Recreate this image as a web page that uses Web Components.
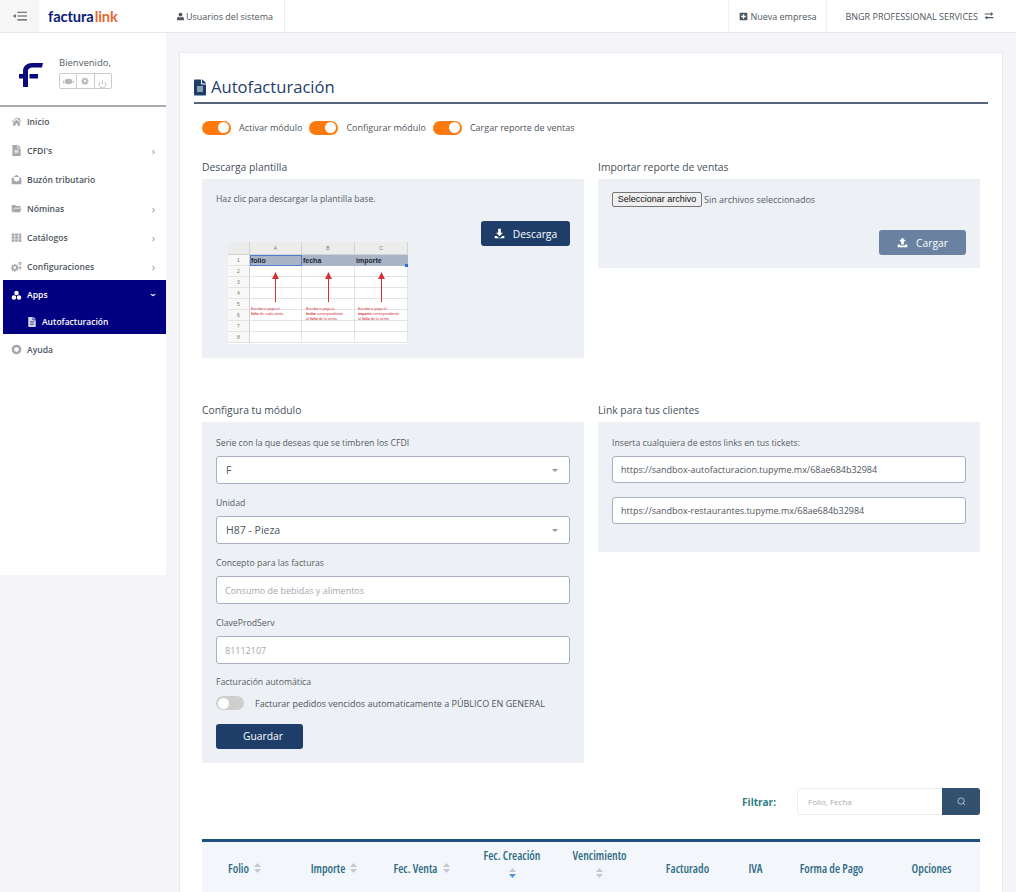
<!DOCTYPE html>
<html lang="es">
<head>
<meta charset="utf-8">
<title>Autofacturación</title>
<style>
  html, body { margin: 0; height: 892px; overflow: hidden; background: #f4f4f9; }
  body { font-family: "Open Sans", "Liberation Sans", sans-serif; color: #5c6873; }
</style>
</head>
<body>
<app-shell>
  <top-bar slot="top"></top-bar>
  <side-bar slot="side"></side-bar>
  <module-card slot="main"></module-card>
</app-shell>

<script>
const ICONS = {
  doc: ['0 0 384 512', 'M224 136V0H24C10.7 0 0 10.7 0 24v464c0 13.3 10.7 24 24 24h336c13.3 0 24-10.7 24-24V160H248c-13.2 0-24-10.8-24-24zm64 236c0 6.6-5.4 12-12 12H108c-6.6 0-12-5.4-12-12v-8c0-6.6 5.4-12 12-12h168c6.6 0 12 5.4 12 12v8zm0-64c0 6.6-5.4 12-12 12H108c-6.6 0-12-5.4-12-12v-8c0-6.6 5.4-12 12-12h168c6.6 0 12 5.4 12 12v8zm0-72v8c0 6.6-5.4 12-12 12H108c-6.6 0-12-5.4-12-12v-8c0-6.6 5.4-12 12-12h168c6.6 0 12 5.4 12 12zm96-114.1v6.1H256V0h6.1c6.4 0 12.5 2.5 17 7l97.9 98c4.500 4.500 7 10.6 7 16.9z'],
  home: ['0 0 16 16', 'M8 2 .5 8.2l.8 1L8 3.7l6.7 5.5.8-1L13 6.1V3h-2v1.5zM3 9.6V14h3.6v-3h2.8v3H13V9.6L8 5.5z'],
  inbox: ['0 0 16 16', 'M8 1 1 6v8a1 1 0 0 0 1 1h12a1 1 0 0 0 1-1V6zM4 4.5h8V9l-4 2.4L4 9z'],
  folder: ['0 0 16 16', 'M1 13V4a1 1 0 0 1 1-1h4l1.500 1.500H13a1 1 0 0 1 1 1V7H4.500L2 13zM5 8h10.500L13 13.500H2z'],
  grid: ['0 0 16 16', 'M1 2h4v3.400H1zm5 0h4v3.400H6zm5 0h4v3.400h-4zM1 6.300h4v3.400H1zm5 0h4v3.400H6zm5 0h4v3.400h-4zM1 10.600h4V14H1zm5 0h4V14H6zm5 0h4V14h-4z'],
  cogs: ['0 0 16 16', 'M4.600 4h1.600l.3 1.500 1.100.5L9 5.200l1.100 1.100-.8 1.300.5 1.100 1.400.3v1.600l-1.400.3-.5 1.100.8 1.300L9 14.400l-1.300-.8-1.200.5-.3 1.400H4.600l-.3-1.400-1.200-.5-1.300.8L.7 13.300l.8-1.300-.5-1.100-1-.3V9l1-.3.5-1.100-.8-1.300 1.100-1.100 1.300.8 1.200-.5zm.8 3.800a2 2 0 1 0 0 4 2 2 0 0 0 0-4zM13 1a2.400 2.400 0 1 0 0 4.800A2.400 2.400 0 0 0 13 1zm0 1.500a.9.9 0 1 1 0 1.800.9.9 0 0 1 0-1.800zm0 5a2.400 2.400 0 1 0 0 4.800 2.400 2.400 0 0 0 0-4.800zm0 1.500a.9.9 0 1 1 0 1.800.9.9 0 0 1 0-1.800z'],
  apps: ['0 0 16 16', 'M8 1a3.300 3.300 0 1 0 0 6.600A3.300 3.300 0 0 0 8 1zM4.300 7.600a3.300 3.300 0 1 0 0 6.600 3.300 3.300 0 0 0 0-6.600zm7.400 0a3.300 3.300 0 1 0 0 6.600 3.300 3.300 0 0 0 0-6.600z'],
  ring: ['0 0 16 16', 'M8 1a7 7 0 1 0 0 14A7 7 0 0 0 8 1zm0 3.600a3.400 3.400 0 1 1 0 6.800 3.400 3.400 0 0 1 0-6.800z'],
  user: ['0 0 14 14', 'M7 1a3 3 0 1 0 0 6 3 3 0 0 0 0-6zM4 7.500C2.300 8 1.500 9.500 1.500 11.500c0 .9.600 1.500 1.500 1.500h8c.9 0 1.500-.6 1.500-1.500 0-2-.8-3.500-2.500-4-.8.600-1.800 1-3 1s-2.200-.4-3-1z'],
  plus: ['0 0 14 14', 'M2 1h10a1 1 0 0 1 1 1v10a1 1 0 0 1-1 1H2a1 1 0 0 1-1-1V2a1 1 0 0 1 1-1zm4 2.500V6H3.500v2H6v2.500h2V8h2.500V6H8V3.500z'],
  swap: ['0 0 14 14', 'M1 3.500h8.500V1.500L13 4.300 9.500 7V5H1zM13 8.500H4.500v-2L1 9.300 4.500 12v-2H13z'],
  menu: ['0 0 16 12', 'M5 1h11v1.400H5zM5 5.300h11v1.400H5zM5 9.600h11V11H5zM3 3.700v4.600L0 6z'],
  download: ['0 0 16 16', 'M6 1h4v6h3L8 12 3 7h3zM1 11.500h3L6.500 14h3l2.500-2.500h3V15H1z'],
  upload: ['0 0 16 16', 'M8 1l5 5h-3v5H6V6H3zM1 11h3.500v1.500h7V11H15v4H1z'],
  eye: ['0 0 16 10', 'M0 4h2v3H0zm14 0h2v3h-2zM3 2.500c1.500-1.500 3.500-2 5-1 1.500-1 3.500-.5 5 1v5c-1.500 1-3 1.500-5 1.500s-3.500-.5-5-1.500z'],
  gear: ['0 0 16 16', 'M7 1h2l.4 2 1.500.6 1.700-1.100 1.400 1.400-1.100 1.700.6 1.500 2 .4v2l-2 .4-.6 1.500 1.100 1.700-1.400 1.400-1.700-1.100-1.500.6-.4 2H7l-.4-2-1.500-.6-1.700 1.100-1.400-1.400 1.100-1.700-.6-1.500-2-.4V7l2-.4.6-1.500-1.100-1.700 1.400-1.400 1.700 1.100 1.500-.6zm1 4.500a2.500 2.500 0 1 0 0 5 2.500 2.500 0 0 0 0-5z'],
};

class AppIcon extends HTMLElement {
  connectedCallback() {
    const [box, d] = ICONS[this.getAttribute('name')];
    const size = this.getAttribute('size') || 12;
    const w = this.getAttribute('w') || size;
    this.attachShadow({ mode: 'open' }).innerHTML = `
      <style>
        :host { display: inline-flex; flex: none; }
        svg { display: block; fill: currentColor; }
      </style>
      <svg width="${w}" height="${size}" viewBox="${box}"><path d="${d}"/></svg>`;
  }
}
customElements.define('app-icon', AppIcon);

class AppShell extends HTMLElement {
  constructor() {
    super();
    this.attachShadow({ mode: 'open' }).innerHTML = `
      <style>
        :host { display: grid; grid-template-columns: 166px 1fr; grid-template-rows: 33px 1fr; height: 892px; overflow: hidden; }
        .top { grid-column: 1 / 3; }
        .main { padding: 19px 13px 0; min-width: 0; }
        .side { height: 542px; }
      </style>
      <div class="top"><slot name="top"></slot></div>
      <div class="side"><slot name="side"></slot></div>
      <div class="main"><slot name="main"></slot></div>`;
  }
}
customElements.define('app-shell', AppShell);

class TopBar extends HTMLElement {
  constructor() {
    super();
    this.attachShadow({ mode: 'open' }).innerHTML = `
      <style>
        :host { display: flex; height: 32px; background: #fff; border-bottom: 1px solid #e4e6eb; font-size: 9px; color: #4e5660; align-items: stretch; }
        .burger { width: 39px; background: #f6f6f6; display: flex; align-items: center; justify-content: center; color: #555; }
        .logo { width: 127px; padding-left: 9px; box-sizing: border-box; display: flex; align-items: center; font: 700 14.700px/1 Lato, "Open Sans", sans-serif; letter-spacing: -.1px; color: #0a1a78; }
        .logo span { color: #e8672e; font-weight: 700; margin-left: 1px; }
        .item { display: flex; align-items: center; gap: 1px; padding: 0 11px 0 10px; border-right: 1px solid #eeeff2; }
        .grow { flex: 1; border-right: 1px solid #eeeff2; }
        .nueva { padding: 0 10px; gap: 2px; }
        .company { border: 0; gap: 6px; padding: 0 22px 0 18px; }
      </style>
      <div class="burger"><app-icon name="menu" size="14"></app-icon></div>
      <div class="logo">factura<span>link</span></div>
      <div class="item"><app-icon name="user" size="9"></app-icon>Usuarios del sistema</div>
      <div class="grow"></div>
      <div class="item nueva"><app-icon name="plus" size="9"></app-icon>Nueva empresa</div>
      <div class="item company">BNGR PROFESSIONAL SERVICES<app-icon name="swap" size="10"></app-icon></div>`;
  }
}
customElements.define('top-bar', TopBar);

class SideItem extends HTMLElement {
  constructor() {
    super();
    const arrow = this.hasAttribute('arrow') ? '<span class="arrow">›</span>' : '';
    this.attachShadow({ mode: 'open' }).innerHTML = `
      <style>
        :host { display: flex; height: 29px; align-items: center; padding: 0 11px; gap: 5px; font-size: 8.600px; font-weight: 600; color: #4e5660; }
        app-icon { color: #a3a8ae; width: 11px; }
        :host([active]) { color: #fff; }
        :host([active]) app-icon { color: #fff; }
        .label { flex: 1; }
        .arrow { color: #a6abb1; font-size: 10px; }
        :host([active]) .arrow { color: #fff; transform: rotate(90deg); }
      </style>
      <app-icon name="${this.getAttribute('icon')}" size="11"></app-icon>
      <span class="label"><slot></slot></span>${arrow}`;
  }
}
customElements.define('side-item', SideItem);

class SideBar extends HTMLElement {
  constructor() {
    super();
    this.attachShadow({ mode: 'open' }).innerHTML = `
      <style>
        :host { display: block; height: 100%; background: #fff; }
        .welcome { height: 74px; box-sizing: border-box; border-bottom: 2px solid #a9abae; display: flex; padding: 23px 0 0 19px; gap: 16px; }
        .welcome svg { margin-top: 6px; }
        .hello { font-size: 9.500px; color: #555d66; line-height: 13px; }
        .tools { display: flex; width: 53px; height: 16px; margin-top: 4px; border: 1px solid #c8ccd1; border-radius: 2px; box-sizing: border-box; }
        .tools i { flex: 1; display: flex; align-items: center; justify-content: center; color: #b5b9be; border-left: 1px solid #c8ccd1; font-style: normal; }
        .tools i:first-child { border-left: 0; }
        .group { background: #000080; margin-left: 3px; height: 54px; margin-top: -1px; margin-bottom: 1px; padding-top: 1px; box-sizing: border-box; }
        .group side-item { padding-left: 8px; height: 28px; }
        .sub { display: flex; height: 25px; align-items: center; gap: 5px; padding-left: 24px; font-size: 8.500px; font-weight: 600; color: #fff; }
        .sub app-icon { color: #d5d5e8; }
      </style>
      <div class="welcome">
        <svg width="24" height="25" viewBox="0 0 24 25"><path fill="#0b0b7c" d="M4 25V9C4 4 8 1 13 1h11l-1 4.500H14c-3 0-5 1-5 4V25zM0 12h4v4.500H0zM10.500 12H19v4.500h-8.500z"/></svg>
        <div>
          <div class="hello">Bienvenido,</div>
          <div class="tools">
            <i><app-icon name="eye" size="11"></app-icon></i>
            <i><app-icon name="gear" size="8"></app-icon></i>
            <i><svg width="9" height="9" viewBox="0 0 10 10"><path fill="none" stroke="currentColor" d="M5 .5v4M2.800 2A3.700 3.700 0 1 0 7.200 2"/></svg></i>
          </div>
        </div>
      </div>
      <side-item icon="home">Inicio</side-item>
      <side-item icon="doc" arrow>CFDI's</side-item>
      <side-item icon="inbox">Buzón tributario</side-item>
      <side-item icon="folder" arrow>Nóminas</side-item>
      <side-item icon="grid" arrow>Catálogos</side-item>
      <side-item icon="cogs" arrow>Configuraciones</side-item>
      <div class="group">
        <side-item icon="apps" arrow active>Apps</side-item>
        <div class="sub"><app-icon name="doc" size="10"></app-icon>Autofacturación</div>
      </div>
      <side-item icon="ring">Ayuda</side-item>`;
  }
}
customElements.define('side-bar', SideBar);

class ToggleSwitch extends HTMLElement {
  constructor() {
    super();
    this.attachShadow({ mode: 'open' }).innerHTML = `
      <style>
        :host { display: inline-flex; align-items: center; gap: 8px; font-size: 9px; color: #4e5660; }
        .track { width: 29px; height: 14px; border-radius: 7px; background: #ff7a0d; display: flex; justify-content: flex-end; align-items: center; padding: 0 2px; box-sizing: border-box; }
        .knob { width: 11px; height: 11px; background: #fff; border-radius: 50%; }
        :host([off]) .track { background: #cfcfcf; justify-content: flex-start; width: 28px; }
      </style>
      <span class="track"><span class="knob"></span></span>
      <span><slot></slot></span>`;
  }
}
customElements.define('toggle-switch', ToggleSwitch);

class PanelBox extends HTMLElement {
  constructor() {
    super();
    this.attachShadow({ mode: 'open' }).innerHTML = `
      <style>
        :host { display: block; }
        h3 { margin: 0; font-size: 10.300px; line-height: 14px; font-weight: 400; color: #46505a; padding-bottom: 5px; }
        .box { background: #edf0f4; padding: 14px; box-sizing: border-box; height: var(--h); }
      </style>
      <h3>${this.getAttribute('heading')}</h3>
      <div class="box" style="--h:${this.getAttribute('h')}px"><slot></slot></div>`;
  }
}
customElements.define('panel-box', PanelBox);

class ActionButton extends HTMLElement {
  constructor() {
    super();
    const icon = this.getAttribute('icon');
    this.attachShadow({ mode: 'open' }).innerHTML = `
      <style>
        :host { display: inline-flex; align-items: center; justify-content: center; gap: 8px; width: 89px; height: 25px; background: #1e3e69; color: #fff; border-radius: 3px; font-size: 10.300px; box-sizing: border-box; }
        :host([muted]) { background: #6a81a1; width: 87px; }
      </style>
      ${icon ? `<app-icon name="${icon}" size="11"></app-icon>` : ''}<slot></slot>`;
  }
}
customElements.define('action-button', ActionButton);

class FormField extends HTMLElement {
  constructor() {
    super();
    const label = this.getAttribute('label');
    const select = this.hasAttribute('select');
    this.attachShadow({ mode: 'open' }).innerHTML = `
      <style>
        :host { display: block; font-size: 8.700px; color: #555d66; }
        label { display: block; line-height: 12px; margin-bottom: 7px; }
        .ctl { height: var(--ctl-h, 28px); background: #fff; border: 1px solid #a9b0bd; border-radius: 3px; box-sizing: border-box; display: flex; align-items: center; padding: 0 11px 0 8px; justify-content: space-between; color: #4e5660; font-size: 9px; }
        :host([select]) .ctl { font-size: 10.500px; padding-left: 9px; }
        :host([empty]) .ctl { color: #a5a9af; }
        .caret { width: 0; height: 0; border: 3.500px solid transparent; border-top: 3.500px solid #94989e; border-bottom: 0; }
      </style>
      ${label ? `<label>${label}</label>` : ''}
      <div class="ctl"><span><slot></slot></span>${select ? '<span class="caret"></span>' : ''}</div>`;
  }
}
customElements.define('form-field', FormField);

class SheetPreview extends HTMLElement {
  constructor() {
    super();
    const arrow = `<svg width="7" height="30" viewBox="0 0 7 30"><path fill="#d6303a" d="M3.500 0 7 7H4v23H3V7H0z"/></svg>`;
    const cols = [
      ['folio', 'Escribe o pega el', '<b>folio</b> de cada venta', 1],
      ['fecha', 'Escribe o pega la', '<b>fecha</b> correspondiente<br>al <b>folio</b> de la venta', 4],
      ['importe', 'Escribe o pega el', '<b>importe</b> correspondiente<br>al <b>folio</b> de la venta', 3],
    ];
    this.attachShadow({ mode: 'open' }).innerHTML = `
      <style>
        :host { display: grid; grid-template-columns: 22px 52px 53px 53px; grid-template-rows: 13px repeat(8, 11px); width: 180px; height: 102px; overflow: hidden; background: #fff; font: 5px/1 "Liberation Sans", sans-serif; color: #777; }
        .h { background: #ececec; display: flex; align-items: center; justify-content: center; border-right: 1px solid #d2d2d2; border-bottom: 1px solid #d2d2d2; box-sizing: border-box; }
        .n { grid-column: 1; background: #f8f8f8; border-bottom-color: #e4e4e4; }
        .t { background: #a9b5c6; color: #1c2530; font-weight: 700; font-size: 7px; display: flex; align-items: center; padding-left: 1px; position: relative; }
        .t.first { outline: 1px solid #4a80d0; outline-offset: -1px; }
        .t i { position: absolute; right: 0; bottom: -1px; width: 3px; height: 3px; background: #2f6fd0; }
        .note { display: flex; flex-direction: column; align-items: center; padding-top: 6px; box-sizing: border-box; border-right: 1px solid #e4e4e4; background: repeating-linear-gradient(#fff 0 10px, #e4e4e4 10px 11px); }
        .note div { width: 100%; box-sizing: border-box; padding: 5px 0 0 var(--x); color: #d6303a; font-size: 3.700px; line-height: 5.200px; white-space: nowrap; }
      </style>
      <div class="h"></div><div class="h">A</div><div class="h">B</div><div class="h">C</div>
      <div class="h n">1</div>
      ${cols.map((c, i) => `<div class="t ${i ? '' : 'first'}">${c[0]}${i === 2 ? '<i></i>' : ''}</div>`).join('')}
      ${[2,3,4,5,6,7,8].map((n, i) => `<div class="h n" style="grid-row:${i + 3}">${n}</div>`).join('')}
      ${cols.map((c, i) => `<div class="note" style="grid-column:${i + 2};grid-row:3/10;--x:${c[3]}px">${arrow}<div>${c[1]}<br>${c[2]}</div></div>`).join('')}`;
  }
}
customElements.define('sheet-preview', SheetPreview);

class TableHead extends HTMLElement {
  constructor() {
    super();
    const sort = (on) => `<svg width="7" height="10" viewBox="0 0 7 10"><path fill="#c4c8cd" d="M3.500 0 7 4H0z"/><path fill="${on ? '#4d94e0' : '#c4c8cd'}" d="M3.500 10 0 6h7z"/></svg>`;
    const cols = [
      ['Folio', 'in', 85], ['Importe', 'in', 94], ['Fec. Venta', 'in', 81], ['Fec. Creación', 'blue', 100],
      ['Vencimiento', 'down', 75], ['Facturado', '', 101], ['IVA', '', 35], ['Forma de Pago', '', 117], ['Opciones', '', 83],
    ];
    this.attachShadow({ mode: 'open' }).innerHTML = `
      <style>
        :host { display: flex; border-top: 3px solid #1e4f80; background: #f3f7fb; height: 52px; font-size: 11.800px; font-stretch: condensed; font-weight: 600; color: #2f6a84; margin-top: 24px; box-sizing: content-box; white-space: nowrap; }
        .c { display: flex; align-items: center; justify-content: center; height: 100%; flex: none; gap: 5px; box-sizing: border-box; padding-bottom: 1px; }
        .c.stack { flex-direction: column; justify-content: flex-start; gap: 5px; padding: 5px 0 0; }
        .c.stack span { line-height: 16px; }
        svg { display: block; flex: none; }
      </style>
      ${cols.map(([t, s, w]) => {
        if (s === 'in') return `<div class="c" style="width:${w}px">${t}${sort(false)}</div>`;
        if (s) return `<div class="c stack" style="width:${w}px"><span>${t}</span>${sort(s === 'blue')}</div>`;
        return `<div class="c" style="width:${w}px">${t}</div>`;
      }).join('')}`;
  }
}
customElements.define('table-head', TableHead);

class ModuleCard extends HTMLElement {
  constructor() {
    super();
    this.attachShadow({ mode: 'open' }).innerHTML = `
      <style>
        :host { display: block; background: #fff; border: 1px solid #e9eaee; height: 860px; box-sizing: border-box; padding: 22px 14px 0; }
        h1 { margin: 0; display: flex; align-items: center; gap: 5px; font-size: 16.600px; font-weight: 400; line-height: 24px; color: #1e3e69; border-bottom: 2px solid #56677f; padding-bottom: 3px; }
        .body { padding: 0 8px; }
        .toggles { display: flex; gap: 7px; padding-top: 16px; height: 15px; align-items: center; }
        .grid { display: grid; grid-template-columns: 382px 382px; gap: 14px; margin-top: 25px; align-items: start; }
        .row2 { margin-top: 45px; }
        .descarga { display: grid; grid-template-columns: 1fr auto; align-items: start; font-size: 8.650px; color: #555d66; }
        .descarga p { margin: 0; line-height: 12px; grid-column: 1 / 3; }
        .descarga action-button { margin-top: 16px; }
        .descarga sheet-preview { margin: 37px 0 0 12px; }
        .file { display: flex; align-items: center; gap: 2px; font-size: 9px; color: #555d66; margin-top: -1px; }
        .file span.btn { font: 9px/1 "Liberation Sans", sans-serif; color: #111; background: #efefef; border: 1px solid #767676; border-radius: 2px; height: 15px; box-sizing: border-box; width: 90px; justify-content: center; display: flex; align-items: center; }
        .right { display: flex; justify-content: flex-end; margin-top: 23px; }
        .cfg { margin-top: 1px; }
        .cfg form-field { margin-bottom: 13px; }
        .auto { margin-top: -1px; }
        .auto-label { font-size: 8.700px; line-height: 12px; color: #555d66; }
        .auto toggle-switch { display: flex; margin-top: 8px; gap: 11px; }
        .save { margin-top: 13px; display: block; }
        .save action-button { width: 87px; padding-left: 7px; }
        .links p { margin: 1px 0 7px; font-size: 8.700px; line-height: 12px; color: #555d66; }
        .links form-field { margin-bottom: 14px; --ctl-h: 27px; }
        .filter { display: flex; justify-content: flex-end; align-items: center; margin-top: 25px; font-size: 10px; font-weight: 700; color: #2e7d84; height: 27px; }
        .search { display: flex; width: 183px; height: 27px; margin-left: 21px; border: 1px solid #eceef1; border-radius: 3px; box-sizing: border-box; font-weight: 400; font-size: 8px; color: #a8adb3; align-items: center; padding-left: 10px; justify-content: space-between; background: #fff; }
        .go { width: 38px; height: 27px; background: #34506f; border-radius: 0 3px 3px 0; margin-right: -1px; display: flex; align-items: center; justify-content: center; }
      </style>
      <h1><app-icon name="doc" size="17" w="12"></app-icon>Autofacturación</h1>
      <div class="body">
        <div class="toggles">
          <toggle-switch>Activar módulo</toggle-switch>
          <toggle-switch>Configurar módulo</toggle-switch>
          <toggle-switch>Cargar reporte de ventas</toggle-switch>
        </div>
        <div class="grid">
          <panel-box heading="Descarga plantilla" h="179">
            <div class="descarga">
              <p>Haz clic para descargar la plantilla base.</p>
              <sheet-preview></sheet-preview>
              <action-button icon="download">Descarga</action-button>
            </div>
          </panel-box>
          <panel-box heading="Importar reporte de ventas" h="89">
            <div class="file"><span class="btn">Seleccionar archivo</span><span>Sin archivos seleccionados</span></div>
            <div class="right"><action-button muted icon="upload">Cargar</action-button></div>
          </panel-box>
        </div>
        <div class="grid row2">
          <panel-box heading="Configura tu módulo" h="341">
            <div class="cfg">
              <form-field select label="Serie con la que deseas que se timbren los CFDI">F</form-field>
              <form-field select label="Unidad">H87 - Pieza</form-field>
              <form-field empty label="Concepto para las facturas">Consumo de bebidas y alimentos</form-field>
              <form-field empty label="ClaveProdServ">81112107</form-field>
              <div class="auto">
                <div class="auto-label">Facturación automática</div>
                <toggle-switch off>Facturar pedidos vencidos automaticamente a PÚBLICO EN GENERAL</toggle-switch>
              </div>
              <div class="save"><action-button>Guardar</action-button></div>
            </div>
          </panel-box>
          <panel-box heading="Link para tus clientes" h="130">
            <div class="links">
              <p>Inserta cualquiera de estos links en tus tickets:</p>
              <form-field>https://sandbox-autofacturacion.tupyme.mx/68ae684b32984</form-field>
              <form-field>https://sandbox-restaurantes.tupyme.mx/68ae684b32984</form-field>
            </div>
          </panel-box>
        </div>
        <div class="filter">Filtrar:
          <div class="search">Folio, Fecha
            <div class="go"><svg width="9" height="9" viewBox="0 0 10 10"><circle cx="4.500" cy="4.500" r="3.500" fill="none" stroke="#b9c6d6"/><path d="M7 7l2 2" stroke="#b9c6d6"/></svg></div>
          </div>
        </div>
        <table-head></table-head>
      </div>`;
  }
}
customElements.define('module-card', ModuleCard);
</script>
</body>
</html>
